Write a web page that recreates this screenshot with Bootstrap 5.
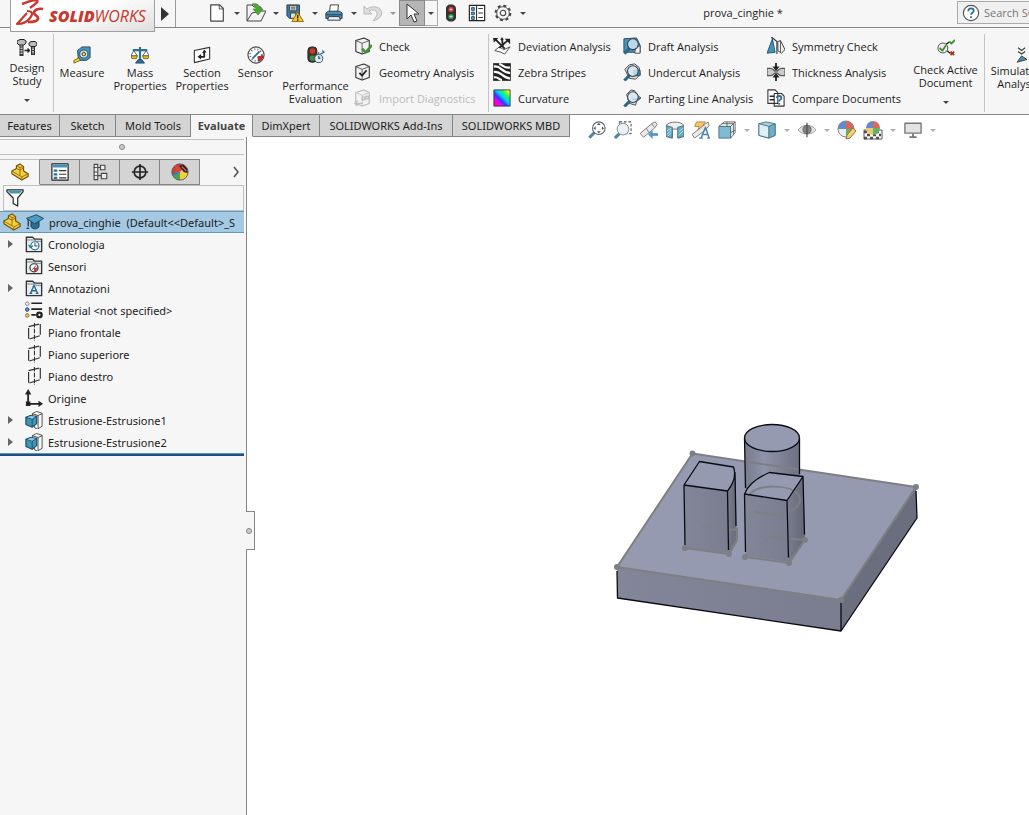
<!DOCTYPE html>
<html lang="en">
<head>
<meta charset="utf-8">
<meta name="viewport" content="width=device-width, initial-scale=1">
<title>prova_cinghie - SOLIDWORKS</title>
<link href="https://cdn.jsdelivr.net/npm/bootstrap@5.3.0/dist/css/bootstrap.min.css" rel="stylesheet">
<style>
  :root { --chrome: #f6f6f6; --edge: #868686; --tab: #d4d4d4; }
  body { font-family: "Open Sans", "Noto Sans", sans-serif; font-size: 11px; line-height: 13px; color: #1c1c1c; background: #fff; }
  svg { display: block; flex: none; fill: none; stroke: #3a3a3a; stroke-linejoin: round; }
  button { border: 0; padding: 0; background: none; color: inherit; }
  .ic { width: 18px; height: 18px; }
  .caret { width: 13px; height: 26px; display: flex; align-items: center; justify-content: center; }
  .caret::after { content: ""; border: 3px solid transparent; border-top-color: #444; border-bottom: 0; }
  .caret.dim::after { border-top-color: #999; }

  /* title bar */
  .titlebar { height: 28px; background: var(--chrome); border-bottom: 1px solid var(--edge); padding-left: 10px; position: relative; z-index: 3; }
  .brand { width: 145px; height: 32px; background: linear-gradient(160deg, #fff 45%, #dedede); border: 1px solid #a0a0a0; border-top: 0; padding-left: 2px; color: #c8382f; font-size: 16px; line-height: 32px; font-style: italic; }
  .brand b { font-weight: 800; }
  .menu-arrow { width: 21px; height: 27px; border-right: 1px solid #999; }
  .tool { width: 26px; height: 26px; display: flex; align-items: center; justify-content: center; }
  .tool.on { background: #b5b5b5; outline: 1px solid #8a8a8a; outline-offset: -1px; }
  .caret.on { border: 1px solid #aaa; border-left: 0; }
  .doc-title { line-height: 26px; }
  .search { width: 72px; height: 23px; margin-top: 1px; border: 1px solid #aaa; border-right: 0; background: #f0f0f0; padding-left: 4px; }
  .search input { border: 0; background: none; padding: 0; margin-left: 4px; width: 45px; outline: 0; }
  .search input::placeholder { color: #777; opacity: 1; }

  /* ribbon */
  .ribbon { height: 87px; background: var(--chrome); border-bottom: 1px solid var(--edge); display: grid; grid-template-columns: 54px 56px 60px 64px 43px 77px 135px 134px 144px 139px 79px 66px; overflow: hidden; }
  .big { display: flex; flex-direction: column; align-items: center; padding-top: 18px; text-align: center; white-space: nowrap; }
  .big.high { padding-top: 11px; }
  .big .ic { margin-bottom: 2px; }
  .big .caret { height: 18px; margin-top: 6px; }
  .rule-end { background: linear-gradient(#c4c4c4, #c4c4c4) right 6px / 1px 78px no-repeat; }
  .stack { padding-top: 5px; }
  .cmd { display: flex; align-items: center; height: 26px; gap: 7px; white-space: nowrap; }
  .cmd:disabled { color: #bbb; }
  .cmd:disabled svg { opacity: .3; }

  /* command tabs and view toolbar */
  .tabs { height: 22px; position: relative; z-index: 2; }
  .cmd-tabs { display: grid; grid-template-columns: 60px 56px 75px 62px 67px 133px 117px; flex: none; font-family: "Noto Sans", sans-serif; }
  .cmd-tabs button { background: var(--tab); border-right: 1px solid var(--edge); border-bottom: 1px solid var(--edge); white-space: nowrap; }
  .cmd-tabs button.active { background: var(--chrome); border-bottom-color: var(--chrome); font-weight: 700; color: #444; font-family: "Open Sans", sans-serif; }
  .hud { margin: 2px 0 0 14px; opacity: .8; }
  .hud .caret { width: 14px; }

  /* feature manager */
  .side { width: 247px; flex: none; background: var(--chrome); border-right: 1px solid var(--edge); padding: 2px 2px 0 0; position: relative; }
  .grip { height: 16px; border: solid #c0c0c0; border-width: 1px 0; }
  .dot { width: 6px; height: 6px; border-radius: 50%; border: 1px solid #888; background: #ccc; }
  .mgr { margin-top: 4px; height: 26px; }
  .mgr .pane { width: 40px; background: var(--tab); border: 1px solid var(--edge); border-left: 0; display: flex; align-items: center; justify-content: center; }
  .mgr .pane.active { background: var(--chrome); border-color: #c0c0c0 var(--edge) transparent transparent; }
  .filter { height: 26px; margin-left: 3px; padding-left: 2px; border: 1px solid #c0c0c0; }
  .filter input { border: 0; background: none; outline: 0; padding: 0; min-width: 0; }
  .tree { font-family: "Noto Sans", sans-serif; border-bottom: 2px solid #1f4f82; box-shadow: inset 0 -1px #5d93b5; padding-bottom: 1px; }
  .tree li { height: 22px; display: flex; align-items: center; white-space: nowrap; gap: 5px; overflow: hidden; }
  .tree li.sel { background: #a5c8e3; border: solid #5e9bc4; border-width: 1px 0; padding-left: 3px; gap: 4px; }
  .twist { width: 20px; height: 22px; padding-left: 8px; display: flex; align-items: center; }
  button.twist::after { content: ""; border: 4px solid transparent; border-left: 5px solid #666; border-right: 0; }
  .splitter { position: absolute; left: 246px; top: 374px; width: 9px; height: 39px; background: var(--chrome); border: 1px solid var(--edge); border-left: 0; }
  .view { min-width: 0; overflow: hidden; }
  .view svg { width: 100%; }
</style>
<script src="https://cdn.jsdelivr.net/npm/bootstrap@5.3.0/dist/js/bootstrap.bundle.min.js"></script>
</head>
<body class="d-flex flex-column vh-100 overflow-hidden">

<!-- shared icons -->
<svg width="0" height="0" class="position-absolute" aria-hidden="true">
  <defs>
    <symbol id="part" viewBox="0 0 20 20"><path d="M1 9l5-3V3l4-2 4 3v5l5 3v3l-7 4L1 12z" fill="#f6cf3e" stroke="#6e5110" stroke-width="1.300"/><path d="M1 9l11 6.500 7-3.500M12 15.500V19M6 6l4 2 4-2.500M6 3l4 2 4-1M10 5v9" stroke="#8f6c14"/></symbol>
    <symbol id="folder" viewBox="0 0 20 20"><path d="M1.500 18.500V2.500h7l2 2h8v14z" fill="#e8eef0" stroke="#333" stroke-width="1.500"/><path d="M2 5.500h9l1 1.500h6" stroke="#777"/></symbol>
    <symbol id="plane" viewBox="0 0 20 20"><path d="M4 4l13-3v13l-13 4z" stroke="#333" stroke-width="1.300" stroke-dasharray="12 1.500"/><path d="M10.500 0v20" stroke="#333" stroke-width="1.200" stroke-dasharray="5 1.500"/></symbol>
    <symbol id="extrude" viewBox="0 0 20 20"><path d="M8 3l5-2.500 6 2V17l-5 3-3-1z" fill="#f8f8f8" stroke="#444"/><path d="M14.500 5v14M14.500 5l4.500-2M8 3l6.500 2" stroke="#444"/><path d="M1 7l5-2 7 1v8l-5 4-7-3z" fill="#3f94b8" stroke="#1c4e68" stroke-width="1.300"/><path d="M1 7l7 2 5-3M8 9v8" stroke="#1c4e68"/><path d="M2.500 7l4-1.500 5 .7L8 8.500z" fill="#8ccbe2" stroke="none"/></symbol>
    <symbol id="cube" viewBox="0 0 20 20"><path d="M2 4l9-3 6 3v12l-8 3-7-3z" fill="#f2f2f2" stroke="#333" stroke-width="1.200"/><path d="M2 4l7 3 8-3M9 7v12" stroke="#555"/></symbol>
    <symbol id="lens" viewBox="0 0 20 20"><path d="M1.500 18.500l6-6" stroke="#2d6687" stroke-width="3.400"/><circle cx="11" cy="8" r="6" fill="#d8eaf3" fill-opacity=".8" stroke="#345" stroke-width="1.200"/></symbol>
  </defs>
</svg>

<header class="titlebar d-flex align-items-start flex-shrink-0">
  <div class="brand d-flex flex-shrink-0">
    <svg width="32" height="28" viewBox="0 0 32 28"><g stroke="#c8382f"><path d="M9 4c6-2 10-4 14-4 4 1-1 4-6 8" stroke-width="2.400"/><path d="M14 11c6 0 6 3 3 7-3 4-8 6-13 6l10-11" stroke-width="2.200"/><path d="M30 9c-5-1-9 1-9 4 1 3 5 3 4 6s-6 3-10 3" stroke-width="2.600"/></g></svg>
    <span class="ms-1"><b>SOLID</b>WORKS</span>
  </div>
  <button class="menu-arrow d-flex align-items-center justify-content-center" aria-label="Show menu"><svg width="8" height="14" viewBox="0 0 8 14"><path d="M0 0l8 7-8 7z" fill="#333" stroke="none"/></svg></button>
  <nav class="d-flex flex-shrink-0 ps-4 ms-1" aria-label="Quick access">
    <button class="tool" aria-label="New"><svg class="ic" viewBox="0 0 20 20"><path d="M3 1h10l4 4v14H3z" fill="#fff" stroke="#444" stroke-width="1.300"/><path d="M12.500 1v4.500h4" stroke="#444"/></svg></button><button class="caret" aria-label="New options"></button>
    <button class="tool" aria-label="Open"><svg width="20" height="20" viewBox="0 0 20 20"><path d="M1 18V2h5l2 2h7v4h5l-5 10z" fill="#f2f2f2" stroke="#444"/><path d="M1 18L6 10l9-2" stroke="#444"/><path d="M6 1c5-1 8 1 8 5h3l-5 6-5-6h3c0-2-1-3-4-5z" fill="#4eaa32" stroke="#2b7a1c" stroke-width=".6"/></svg></button><button class="caret" aria-label="Open options"></button>
    <button class="tool" aria-label="Save"><svg class="ic" viewBox="0 0 20 20"><path d="M1 1h14v15H4l-3-3z" fill="#3a7ea3" stroke="#2a3b47"/><path d="M4 1.500h8v6H4z" fill="#e6e6e6"/><path d="M5.500 3.500h5M5.500 5.500h5M5 10h6v6H5z" fill="#ddd"/><path d="M13 9l6.500 10.500h-13z" fill="#f9c430" stroke="#8e6507"/><path d="M13 12v4m0 1v1.500" stroke="#222" stroke-width="1.500"/></svg></button><button class="caret" aria-label="Save options"></button>
    <button class="tool" aria-label="Print"><svg class="ic" viewBox="0 0 20 20"><path d="M5 9l1-8h9l-1 8" fill="#fff" stroke="#333"/><path d="M1 10l3-2h12l3 2v6H1z" fill="#4a91b5" stroke="#234"/><path d="M1 12h18M4 14h12l1 4H3z" fill="#eee" stroke="#234"/></svg></button><button class="caret" aria-label="Print options"></button>
    <button class="tool" aria-label="Undo"><svg width="20" height="20" viewBox="0 0 20 20"><path d="M1 3v8h8L6 8c6-3 10 1 7 6l-3 4c8-2 11-8 7-12-3-3-9-3-13 0z" fill="#ddd" stroke="#bbb"/></svg></button><button class="caret dim" aria-label="Undo options"></button>
    <button class="tool on" aria-label="Select"><svg width="20" height="20" viewBox="0 0 20 20"><path d="M5 1v15l4-4 3 7 3-1-3-7h5z" fill="#fff" stroke="#333"/></svg></button><button class="caret on" aria-label="Select options"></button>
    <button class="tool" aria-label="Rebuild"><svg class="ic" viewBox="0 0 20 20"><rect x="5" y="1" width="10" height="18" rx="4.500" fill="#333" stroke="#222"/><circle cx="10" cy="6" r="3" fill="#c9342c" stroke="none"/><circle cx="10" cy="14" r="3" fill="#37914a" stroke="none"/><path d="M10 4v4M8 6h4M10 12v4M8 14h4" stroke="#fff" stroke-opacity=".6"/></svg></button>
    <button class="tool" aria-label="File properties"><svg class="ic" viewBox="0 0 20 20"><path d="M1.500 1.500h17v17h-17z" fill="#fff" stroke="#222" stroke-width="1.300"/><path d="M4 4h3v3H4zM4 9h3v3H4zM4 14h3v3H4z" fill="#5ba9cd" stroke="#246"/><path d="M9.500 2v16M11.500 5h5M11.500 10h5M11.500 15h5" stroke="#333" stroke-width="1.200"/></svg></button>
    <button class="tool" aria-label="Options"><svg class="ic" viewBox="0 0 20 20"><circle cx="10" cy="10" r="8" stroke="#444" stroke-width="2.600" stroke-dasharray="3.300 3"/><circle cx="10" cy="10" r="7" fill="#f6f6f6" stroke="#444"/><circle cx="10" cy="10" r="3" stroke="#444" stroke-width="1.200"/></svg></button><button class="caret" aria-label="Options menu"></button>
  </nav>
  <div class="doc-title flex-grow-1 text-center">prova_cinghie *</div>
  <label class="search d-flex align-items-center flex-shrink-0">
    <svg class="ic" viewBox="0 0 20 20"><circle cx="10" cy="10" r="8.500" fill="#fff" stroke="#555" stroke-width="1.300"/><path d="M7 8c0-4.500 6-4 6-.5 0 2.500-3 2.500-3 4.500m0 1.500v2" stroke="#2b6d94" stroke-width="2"/></svg>
    <input type="text" placeholder="Search SOLIDWORKS Help" aria-label="Search help">
  </label>
</header>

<section class="ribbon flex-shrink-0" aria-label="Evaluate">
  <button class="big high rule-end"><svg width="20" height="18" viewBox="0 0 20 18"><path d="M4.500 5v12M16 6v10" stroke="#333" stroke-width="4"/><path d="M4.500 6v10M16 7v8" stroke="#ccc" stroke-width="2" stroke-dasharray="1.500 1"/><path d="M0 2l3-1.500h4L9 2v2L7 6H2L0 4zM12 4l2-1.500h4L20 4v2l-2 1.500h-4L12 6z" fill="#bbb" stroke="#222"/><path d="M7.500 11.500h5m-2-2l2 2-2 2" stroke="#222" stroke-width="1.300"/></svg><span class="pt-1">Design<br>Study</span><span class="caret m-0 mt-1"></span></button>
  <button class="big"><svg class="ic" viewBox="0 0 20 20"><path d="M5 5l5-4h9v12l-4 3H6z" fill="#4a91b5" stroke="#244a5e"/><circle cx="12" cy="9" r="4.500" fill="#cfe3ec" stroke="#244a5e"/><circle cx="12" cy="9" r="2" fill="#f2d34c"/><path d="M7 13l-6 3v3l7-3z" fill="#f4d342" stroke="#75610f"/></svg>Measure</button>
  <button class="big"><svg class="ic" viewBox="0 0 20 20"><path d="M3 5L0 11h7zM17 5l-4 6h7z" fill="#fff" stroke="#555"/><path d="M10 1v16M2 4.500h16" stroke="#2f6f93" stroke-width="2.400"/><path d="M5 19h10l-3-4H8z" fill="#2f6f93" stroke="#234f68"/><path d="M0 11h7l-1 3H1zM13 11h7l-1 3h-5z" fill="#efc430" stroke="#75610f"/></svg>Mass<br>Properties</button>
  <button class="big"><svg class="ic" viewBox="0 0 20 20"><path d="M1.500 5l17-3.500v13L1.500 18.500z" fill="#fff" stroke="#333" stroke-width="1.200"/><path d="M12.500 6v6H7" stroke="#222" stroke-width="2"/><path d="M9 9v6l-4-3zM10 8l2.500-4L15 7z" fill="#222" stroke="none"/></svg>Section<br>Properties</button>
  <button class="big"><svg class="ic" viewBox="0 0 20 20"><circle cx="10" cy="10" r="9" fill="#fff" stroke="#444" stroke-width="1.200"/><circle cx="10" cy="10" r="6.500" stroke="#555" stroke-width="2" stroke-dasharray="1 2.500"/><path d="M18 11a8 8 0 0 1-5 6l-1-5z" fill="#c9302c" stroke="#922"/><path d="M6 14l8-8" stroke="#2b6d94" stroke-width="1.800"/></svg>Sensor</button>
  <button class="big"><svg class="ic" viewBox="0 0 20 20"><rect x="1" y="1" width="10" height="17" rx="4" fill="#3c3c2e" stroke="#222"/><circle cx="6" cy="5.500" r="3" fill="#d8342c" stroke="none"/><circle cx="6" cy="13.500" r="3" fill="#3c8f49" stroke="none"/><circle cx="13" cy="14" r="4.500" fill="#e3edf2" stroke="#345"/><path d="M13 11v3l2-1M13 9V7M15 9l4-2-2-2" stroke="#2b6d94" stroke-width="1.400"/></svg><br>Performance<br>Evaluation</button>

  <div class="stack rule-end">
    <button class="cmd"><svg class="ic" viewBox="0 0 20 20"><use href="#cube"/><path d="M9 13l4 4 7-8" stroke="#3c9128" stroke-width="2.800"/></svg>Check</button>
    <button class="cmd"><svg class="ic" viewBox="0 0 20 20"><use href="#cube"/><path d="M6 11l3 3 5-6" stroke="#222" stroke-width="1.900"/></svg>Geometry Analysis</button>
    <button class="cmd" disabled><svg class="ic" viewBox="0 0 20 20"><use href="#cube"/><path d="M9 9h3v3H9zM13 8h3v3h-3zM10 16H1m3-3l-3 3 3 3" stroke="#444" stroke-width="1.600"/></svg>Import Diagnostics</button>
  </div>
  <div class="stack ps-1">
    <button class="cmd"><svg class="ic" viewBox="0 0 20 20"><path d="M2 15l5-4 5 3 7-3-6 8-4-2z" fill="#fff" stroke="#444"/><path d="M3 3l10 10M16 4L7 12M10 2l1 8" stroke="#222" stroke-width="2"/><path d="M0 1h6L1 6zM13 2h6v6zM8 3l2-3 2 3z" fill="#222" stroke="none"/></svg>Deviation Analysis</button>
    <button class="cmd"><svg class="ic" viewBox="0 0 20 20"><path d="M.500.500h19v19H.500z" fill="#222"/><path d="M1 4c8-2 8 7 18 7M1 10c8-2 9 7 18 7M1 16c5-1 6 3 9 3M7 1c4 1 5 5 12 4" stroke="#fff" stroke-width="2.400"/></svg>Zebra Stripes</button>
    <button class="cmd"><svg class="ic" viewBox="0 0 20 20"><defs><linearGradient id="rain" x1="1" y1="1" x2="0" y2="0"><stop offset=".1" stop-color="#ff2"/><stop offset=".25" stop-color="#2f5"/><stop offset=".45" stop-color="#0cf"/><stop offset=".6" stop-color="#33f"/><stop offset=".75" stop-color="#e0f"/><stop offset="1" stop-color="#f14"/></linearGradient></defs><path d="M1 1h18v18H1z" fill="url(#rain)" stroke="#335" transform="matrix(1 0 0 -1 0 20)"/></svg>Curvature</button>
  </div>
  <div class="stack">
    <button class="cmd"><svg class="ic" viewBox="0 0 20 20"><path d="M1 2l14-1 4 8v8H1z" fill="#4a91b5" stroke="#244a5e"/><path d="M14 10h5v8h-6z" fill="#eee" stroke="#444"/><use href="#lens"/></svg>Draft Analysis</button>
    <button class="cmd"><svg class="ic" viewBox="0 0 20 20"><path d="M2 7l5-5 6-1 5 4 1 8-5 5-7-1z" fill="#ddd" stroke="#444"/><path d="M12 8h7v6h-7z" fill="#4a91b5" stroke="#244a5e"/><use href="#lens" y="1"/></svg>Undercut Analysis</button>
    <button class="cmd"><svg class="ic" viewBox="0 0 20 20"><path d="M4 6l5-5 4 1 2 4 5 4-5 4-1 4-7-2z" fill="#ddd" stroke="#444"/><path d="M10 12l10-2" stroke="#2b6d94" stroke-width="1.500"/><use href="#lens" y="1"/></svg>Parting Line Analysis</button>
  </div>
  <div class="stack">
    <button class="cmd"><svg class="ic" viewBox="0 0 20 20"><path d="M0 18L6 2l3 15z" fill="#3f94b8" stroke="#1c4e68"/><path d="M5 0l6 5v14M6 2l-1-2" stroke="#333" stroke-width="1.200"/><path d="M12 5l3-1 5 10-4 4-4-3z" fill="#eee" stroke="#333"/><path d="M15 4v13" stroke="#555"/></svg>Symmetry Check</button>
    <button class="cmd"><svg class="ic" viewBox="0 0 20 20"><path d="M0 6h4c3 0 3 3 6 3s3-3 6-3h4v8h-4c-3 0-3-3-6-3s-3 3-6 3H0z" fill="#ccc" stroke="#555" stroke-width="1.300"/><path d="M10 0v6M10 20v-6" stroke="#222" stroke-width="2"/><path d="M6 4h8l-4 5zM6 16h8l-4-5z" fill="#222" stroke="none"/></svg>Thickness Analysis</button>
    <button class="cmd"><svg class="ic" viewBox="0 0 20 20"><path d="M1 1h8l3 3v12H1zM8 5h8l3 3v11H8z" fill="#fff" stroke="#333" stroke-width="1.200"/><path d="M3 8h5M3 12h5" stroke="#222" stroke-width="1.600"/><path d="M11 10c0-3 5-3 5 0 0 2-2.500 1.500-2.500 4m0 1.500v2" stroke="#2b6d94" stroke-width="2"/></svg>Compare Documents</button>
  </div>
  <button class="big high rule-end"><svg class="ic" viewBox="0 0 20 20"><path d="M10 6l4-3M11 13l4 3" stroke="#222" stroke-width="1.500"/><circle cx="6.500" cy="10" r="5.500" fill="#eee" stroke="#444"/><path d="M3 10l3 3 4-6M14 3l2 2 4-4" stroke="#3c9128" stroke-width="2"/><path d="M15 14l4 4m0-4l-4 4" stroke="#b03025" stroke-width="2"/></svg><span class="pt-1">Check Active<br>Document</span><span class="caret m-0 mt-1"></span></button>
  <button class="big"><svg width="20" height="18" viewBox="0 0 20 20"><path d="M10 2l4 3 4-3M10 6l4 3 4-3" stroke="#444" stroke-width="1.400"/><path d="M9 18l5-7 6 4z" fill="#3f94b8"/></svg>Simulation<br>Analysis</button>
</section>

<div class="tabs d-flex flex-shrink-0">
  <nav class="cmd-tabs" aria-label="Command manager">
    <button>Features</button><button>Sketch</button><button>Mold Tools</button><button class="active">Evaluate</button><button>DimXpert</button><button>SOLIDWORKS Add-Ins</button><button>SOLIDWORKS MBD</button>
  </nav>
  <nav class="hud d-flex" aria-label="View">
    <button class="tool" aria-label="Zoom to fit"><svg class="ic" viewBox="0 0 20 20"><path d="M1.500 18.500l6-6" stroke="#2d6687" stroke-width="3.400"/><circle cx="12" cy="8" r="7" fill="#fff" stroke="#345" stroke-width="1.200"/><path d="M12 2l2 2.500h-4zM12 14l2-2.500h-4zM6 8l2.500-2v4zM18 8l-2.500-2v4z" fill="#222" stroke="none"/></svg></button>
    <button class="tool" aria-label="Zoom to area"><svg class="ic" viewBox="0 0 20 20"><path d="M6 1h13v13H6z" stroke="#333" stroke-width="1.200" stroke-dasharray="3 2"/><path d="M1 19l5-5" stroke="#2d6687" stroke-width="3.400"/><circle cx="10" cy="9" r="6.500" fill="#e4eef2" stroke="#567"/></svg></button>
    <button class="tool" aria-label="Previous view"><svg class="ic" viewBox="0 0 20 20"><path d="M0 14l7-6 6-5 4-2 2 3-3 4-6 5-6 5z" fill="#e4e4e4" stroke="#555"/><path d="M7 8l3 5M13 3l3 4" stroke="#555"/><path d="M20 15h-8" stroke="#2b7fae" stroke-width="3"/><path d="M14 10v10l-5-5z" fill="#2b7fae" stroke="none"/></svg></button>
    <button class="tool" aria-label="Section view"><svg class="ic" viewBox="0 0 20 20"><path d="M0 5c3-5 17-5 20 0v12l-6 2V9H7v10l-7-2z" fill="#eee" stroke="#444"/><path d="M0 5l7 2v12l-7-2zM13 7l7-2v12l-7 2z" fill="#3f94b8" stroke="#1c4e68"/><path d="M1 11l5-3M1 15l5-5M2 17l4-4M14 12l5-4M14 16l5-5" stroke="#bde"/></svg></button>
    <button class="tool" aria-label="Dynamic annotation views"><svg class="ic" viewBox="0 0 20 20"><path d="M5 1h10l-3 4h3l-9 7 2-6H3z" fill="#f8b940" stroke="#9a6a10"/><path d="M0 15L14 4l4-3 1 4-4 5-12 9z" fill="#e4e4e4" fill-opacity=".9" stroke="#555"/><path d="M10 19l5-12 4 12M11.500 15h6M8 19h4M17 19h3" stroke="#1f6690" stroke-width="1.600"/></svg></button>
    <button class="tool" aria-label="View orientation"><svg class="ic" viewBox="0 0 20 20"><path d="M7 1h12v12l-5 6V6H1z" fill="#fff" stroke="#333"/><path d="M1 6h13v13H1z" fill="#62abc9" stroke="#1c4e68"/><path d="M14 6l5-5M10 1v5M14 13l5-3M17 3v12M4 3h13" stroke="#333"/></svg></button><button class="caret dim" aria-label="Orientation menu"></button>
    <button class="tool" aria-label="Display style"><svg class="ic" viewBox="0 0 20 20"><path d="M1 3l8-2 10 2v13l-7 3-11-3z" fill="#8cc5dc" stroke="#1c4e68"/><path d="M12 6l7-3v13l-7 3z" fill="#4d9cba" stroke="#1c4e68"/><path d="M1 3l11 3v13l-11-3z" fill="#d5edf5" stroke="#1c4e68"/></svg></button><button class="caret dim" aria-label="Display menu"></button>
    <button class="tool" aria-label="Hide or show items"><svg class="ic" viewBox="0 0 20 20"><path d="M0 10c5-7 15-7 20 0-5 6-15 6-20 0z" fill="#ddd" stroke="#888"/><circle cx="10" cy="9.500" r="4.500" fill="#666"/><path d="M10 2v16" stroke="#222" stroke-width="1.300"/></svg></button><button class="caret dim" aria-label="Hide or show menu"></button>
    <button class="tool" aria-label="Edit appearance"><svg width="20" height="20" viewBox="0 0 20 20"><path d="M9 9V1a8 8 0 0 0-8 8z" fill="#3b6fc4" stroke="none"/><path d="M9 9V1a8 8 0 0 1 8 8z" fill="#d6402f" stroke="none"/><path d="M9 9H1a8 8 0 0 0 8 8z" fill="#e9eef4" stroke="none"/><path d="M9 9h8a8 8 0 0 1-8 8z" fill="#3f9f48" stroke="none"/><circle cx="9" cy="9" r="8" stroke="#666"/><path d="M9 19l1-4 6-7 3 3-6 7z" fill="#f5c553" stroke="#75510f"/></svg></button>
    <button class="tool" aria-label="Apply scene"><svg width="20" height="20" viewBox="0 0 20 20"><path d="M1 10h18v9H1z" fill="#fff" stroke="#333"/><path d="M1 12h18M1 18h18" stroke="#222" stroke-width="2.500" stroke-dasharray="3 3"/><path d="M4 15h14" stroke="#222" stroke-width="2.500" stroke-dasharray="3 3"/><path d="M10 8V1a7 7 0 0 0-7 7z" fill="#3b6fc4" stroke="none"/><path d="M10 8V1a7 7 0 0 1 7 7z" fill="#d6402f" stroke="none"/><path d="M10 8H3a7 7 0 0 0 7 7z" fill="#e3c343" stroke="none"/><path d="M10 8h7a7 7 0 0 1-7 7z" fill="#3f9f48" stroke="none"/></svg></button><button class="caret dim" aria-label="Scene menu"></button>
    <button class="tool" aria-label="View settings"><svg class="ic" viewBox="0 0 20 20"><path d="M1 2.500h18v11H1z" fill="#ddd" stroke="#555" stroke-width="1.500"/><path d="M10 14v4M6 18h8" stroke="#555" stroke-width="2"/></svg></button><button class="caret dim" aria-label="View settings menu"></button>
  </nav>
</div>

<main class="d-flex flex-grow-1 overflow-hidden">
  <aside class="side">
    <div class="grip d-flex align-items-center justify-content-center"><span class="dot"></span></div>
    <nav class="mgr d-flex" aria-label="Manager panes">
      <button class="pane active" aria-label="Feature tree"><svg class="ic"><use href="#part"/></svg></button>
      <button class="pane" aria-label="Properties"><svg class="ic" viewBox="0 0 20 20"><path d="M1 1h18v18H1z" fill="#fff" stroke="#222" stroke-width="1.300"/><path d="M2 3.500h16" stroke="#3f94b8" stroke-width="3"/><path d="M3 8.500h4M3 12.500h4M3 16.500h4" stroke="#2b6d94" stroke-width="2.500"/><path d="M9 8.500h8M9 12.500h8M9 16.500h8" stroke="#333" stroke-width="1.300"/></svg></button>
      <button class="pane" aria-label="Configurations"><svg class="ic" viewBox="0 0 20 20"><path d="M3.500 1.500h4v17h-4zM7 5h4M7 14h4M10.500 2.500h5v5h-5zM11.500 11.500h6v6h-6z" fill="#eee" stroke="#444" stroke-width="1.200"/><path d="M3 5h4M3 10h4M3 14h4" stroke="#444"/></svg></button>
      <button class="pane" aria-label="Dimensions"><svg class="ic" viewBox="0 0 20 20"><circle cx="10" cy="10" r="6.500" stroke="#222" stroke-width="1.800"/><path d="M10 1v18M1 10h18" stroke="#222" stroke-width="1.800"/></svg></button>
      <button class="pane" aria-label="Appearances"><svg class="ic" viewBox="0 0 20 20"><path d="M10 10L4 3a9 9 0 0 1 12 0z" fill="#d6402f" stroke="none"/><path d="M10 10L4 3a9 9 0 0 0-3 9z" fill="#d6402f" stroke="none"/><path d="M1 11l9-1v9a9 9 0 0 1-9-8z" fill="#3476c8" stroke="none"/><path d="M2 14l8-3v8a9 9 0 0 1-8-5z" fill="#4aa84a" stroke="none"/><path d="M10 10l9-1a9 9 0 0 1-9 10z" fill="#f4d13c" stroke="none"/><path d="M9 3l5-1 4 4 1 5-5-1z" fill="#222" stroke="none"/><path d="M12 4l5 5" stroke="#e55" stroke-width="1.500"/><circle cx="10" cy="10" r="9" stroke="#555"/></svg></button>
      <button class="ms-auto pe-1" aria-label="More panes"><svg width="8" height="12" viewBox="0 0 8 12"><path d="M2 1l4 5-4 5" stroke="#555" stroke-width="1.600"/></svg></button>
    </nav>
    <label class="filter d-flex align-items-center"><svg class="ic" viewBox="0 0 20 20"><path d="M1 1h18v2l-6 7v9l-5-3v-6L1 3z" fill="#fff" stroke="#222" stroke-width="1.300"/><path d="M2 2h16l-3 3H5z" fill="#3f94b8" stroke="none"/></svg><input type="text" class="flex-grow-1" aria-label="Filter"></label>
    <ul class="tree list-unstyled mb-0">
      <li class="sel"><svg class="ic"><use href="#part"/></svg><svg width="20" height="18" viewBox="0 0 21 20"><path d="M6 9v6c2 4 8 3 9 0V9" fill="#2c6d92" stroke="#1b3e52"/><path d="M1 6l11-4 8 4-10 6z" fill="#4c9bc2" stroke="#1b3e52"/><path d="M3 7v8M1 17h3" stroke="#1b3e52" stroke-width="1.500"/></svg><span>prova_cinghie&nbsp; (Default&lt;&lt;Default&gt;_S</span></li>
      <li><button class="twist" aria-label="Expand"></button><svg class="ic" viewBox="0 0 20 20"><use href="#folder"/><circle cx="11" cy="12" r="4.500" fill="#fff" stroke="#2b6d94" stroke-width="1.300"/><path d="M11 9v3h3M4 11l2 3 3-2" stroke="#2b6d94" stroke-width="1.300"/></svg>Cronologia</li>
      <li><span class="twist"></span><svg class="ic" viewBox="0 0 20 20"><use href="#folder"/><circle cx="10" cy="12" r="4.500" fill="#fff" stroke="#333" stroke-width="1.300"/><path d="M8 14l4-4" stroke="#333"/><path d="M14 12l-3 4-1-3z" fill="#c9302c" stroke="#c9302c"/></svg>Sensori</li>
      <li><button class="twist" aria-label="Expand"></button><svg class="ic" viewBox="0 0 20 20"><use href="#folder"/><path d="M6 16l4-9 4 9M7.500 13h5M5 16h3M12 16h3" stroke="#1f6690" stroke-width="1.500"/></svg>Annotazioni</li>
      <li><span class="twist"></span><svg class="ic" viewBox="0 0 20 20"><circle cx="2.500" cy="3" r="2" stroke="#777"/><circle cx="2.500" cy="9.500" r="2" fill="#4a91d5" stroke="#246"/><circle cx="2.500" cy="16" r="2" fill="#f3c63a" stroke="#864"/><path d="M7 2.500h12M7 9h12M7 15.500h5" stroke="#222" stroke-width="1.900"/><circle cx="16" cy="15.500" r="2.500" stroke="#222" stroke-width="2.500"/></svg>Material &lt;not specified&gt;</li>
      <li><span class="twist"></span><svg class="ic"><use href="#plane"/></svg>Piano frontale</li>
      <li><span class="twist"></span><svg class="ic"><use href="#plane"/></svg>Piano superiore</li>
      <li><span class="twist"></span><svg class="ic"><use href="#plane"/></svg>Piano destro</li>
      <li><span class="twist"></span><svg class="ic" viewBox="0 0 20 20"><path d="M3.500 3v13.500H17" stroke="#222" stroke-width="2"/><path d="M0 6l3.500-6L7 6zM15 13l5 3.500-5 3.500zM1 14h5v5H1z" fill="#222" stroke="none"/></svg>Origine</li>
      <li><button class="twist" aria-label="Expand"></button><svg class="ic"><use href="#extrude"/></svg>Estrusione-Estrusione1</li>
      <li><button class="twist" aria-label="Expand"></button><svg class="ic"><use href="#extrude"/></svg>Estrusione-Estrusione2</li>
    </ul>
    <div class="splitter d-flex align-items-center"><span class="dot"></span></div>
  </aside>

  <div class="view flex-grow-1">
    <!-- drawing units share the window origin -->
    <svg viewBox="247 137 782 678" preserveAspectRatio="xMinYMin meet" role="img" aria-label="Part model">
      <defs>
        <linearGradient id="cyl"><stop offset="0" stop-color="#777b8d"/><stop offset=".35" stop-color="#8f93a9"/><stop offset="1" stop-color="#6c6f80"/></linearGradient>
        <linearGradient id="front"><stop offset="0" stop-color="#838699"/><stop offset="1" stop-color="#7a7d90"/></linearGradient>
        <linearGradient id="sideface"><stop offset="0" stop-color="#7a7d8f"/><stop offset="1" stop-color="#646776"/></linearGradient>
      </defs>
      <g stroke="none">
        <path d="M692.500 453.500L916 487l-75 113-224-33z" fill="#969ab1"/>
        <path d="M617 567l224 33v31l-223.500-33z" fill="url(#front)"/>
        <path d="M841 600l75-113 1 31-76 113z" fill="#6b6e7e"/>
        <path d="M744.500 438h55l1 60h-55z" fill="url(#cyl)"/>
        <ellipse cx="772" cy="438" rx="27.500" ry="13.500" fill="#969ab1"/>
        <path d="M684 485l15.500-23.500 34 5.500q4 12-6 24z" fill="#969ab1"/>
        <path d="M684 485l43.500 6 1.500 62-44-5z" fill="url(#front)"/>
        <path d="M727.500 491q9-10 8-16l1 65-7.500 13z" fill="url(#sideface)"/>
        <path d="M744.500 494q5-13 25-21.500l33.500 4-16 24z" fill="#969ab1"/>
        <path d="M744.500 494l42.500 6.500 2 61.500-43.500-6z" fill="url(#front)"/>
        <path d="M787 500.500l16-24 2 62.500-16 23z" fill="url(#sideface)"/>
      </g>
      <g stroke="#7e7f83" stroke-width="2">
        <path d="M692.500 453.500L916 487l-75 113-224-33z"/>
        <path d="M685 548l44 6 8-14v-10M745 557l44 6 16-23-34-3M728 529l8 1"/>
        <path d="M701 526l28 3M762 543l9-7" stroke-opacity=".5"/>
        <path d="M750 494c9-10 40-10 49 1 6 16-18 22-45 17"/>
        <path d="M732 534l6 6m0-6l-6 6m3-8v10" stroke-width="1" stroke-dasharray="1 1"/>
      </g>
      <g fill="#7e7f83" stroke="none">
        <circle cx="692.500" cy="453.500" r="3"/><circle cx="916" cy="487" r="3"/><circle cx="841" cy="600" r="3"/><circle cx="617" cy="567" r="3"/>
        <circle cx="685" cy="548" r="3"/><circle cx="729" cy="554" r="3"/><circle cx="745" cy="557" r="3"/><circle cx="789" cy="563" r="3"/><circle cx="805" cy="540" r="3"/><circle cx="736" cy="529" r="2"/>
      </g>
      <g stroke="#090b14" stroke-width="1.300">
        <ellipse cx="772" cy="438" rx="27.500" ry="13.500"/>
        <path d="M744.500 438l1 50M799.500 438v36"/>
        <path d="M617 571l.5 27L841 631v-28M841 631l76-113-1-27"/>
        <path d="M685 545l-1-60 15.500-23.500 34 5.500q4 12-6 24L684 485M727.500 491l1 59M735 472l1 54"/>
        <path d="M745.500 552l-1-58q5-13 25-21.500l33.500 4-16 24-42.500-6.500M787 500.500l1.500 57M803 476.500l1.500 58"/>
      </g>
    </svg>
  </div>
</main>
</body>
</html>
